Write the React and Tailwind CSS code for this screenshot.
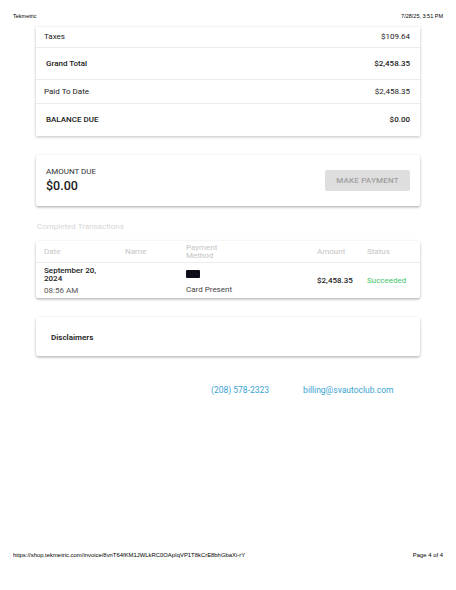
const SUMMARY_ROWS = [
    { label: 'Taxes', value: '$109.64', h: 'h-[21px]', bold: false },
    { label: 'Grand Total', value: '$2,458.35', h: 'h-[32px]', bold: true },
    { label: 'Paid To Date', value: '$2,458.35', h: 'h-[24px]', bold: false },
    { label: 'BALANCE DUE', value: '$0.00', h: 'h-[32px]', bold: true },
];

const cardCls = 'bg-white rounded-[2px] shadow-[0_1px_3px_rgba(0,0,0,0.25),0_2px_2px_rgba(0,0,0,0.08)]';

const App = () => {
    return (
        <div className="w-[456px] h-[590px] bg-white flex flex-col text-[#212121]" style={{ fontFamily: 'Roboto, "Liberation Sans", sans-serif' }}>
            {/* Print header */}
            <div className="flex justify-between px-[13px] pt-[12px] h-[27px] text-[5.5px] text-black" style={{ fontFamily: '"Liberation Sans", Arial, sans-serif' }}>
                <span>Tekmetric</span>
                <span>7/28/25, 3:51 PM</span>
            </div>

            <div className="mx-[36px] flex flex-col">
                {/* Summary card (continued from previous page) */}
                <div className="bg-white shadow-[0_1px_3px_rgba(0,0,0,0.25)] flex flex-col">
                    {SUMMARY_ROWS.map((r, i) => (
                        <div key={r.label} className={`${r.h} flex items-center justify-between pr-[10px] text-[8px] ${r.bold ? 'pl-[10px] font-medium' : 'pl-[8px]'} ${i < SUMMARY_ROWS.length - 1 ? 'border-b border-[#ececec]' : ''}`}>
                            <span>{r.label}</span>
                            <span>{r.value}</span>
                        </div>
                    ))}
                </div>

                {/* Amount due */}
                <div className={`${cardCls} mt-[19px] h-[51px] flex items-center justify-between pl-[10px] pr-[10px]`}>
                    <div className="flex flex-col leading-none">
                        <span className="text-[8px] text-[#333]">AMOUNT DUE</span>
                        <span className="text-[12.5px] font-medium mt-[4px]">$0.00</span>
                    </div>
                    <div className="w-[85px] h-[21px] rounded-[2px] bg-[#dedede] flex items-center justify-center text-[8px] font-medium tracking-[0.2px] text-[#9e9e9e]">
                        MAKE PAYMENT
                    </div>
                </div>

                {/* Transactions */}
                <div className="mt-[17px] h-[12px] pl-[1px] text-[8px] text-[#d6d6d6] leading-none">Completed Transactions</div>
                <div className={`${cardCls} mt-[6px] flex flex-col text-[8px]`}>
                    <div className="h-[22px] grid grid-cols-[81px_61px_131px_50px_1fr] items-center pl-[8px] border-b border-[#ececec] text-[#c4c4c4]">
                        <span>Date</span>
                        <span>Name</span>
                        <span className="leading-[8px]">Payment<br />Method</span>
                        <span>Amount</span>
                        <span>Status</span>
                    </div>
                    <div className="h-[35px] grid grid-cols-[81px_61px_131px_50px_1fr] items-center pl-[8px]">
                        <div className="flex flex-col leading-[8px]">
                            <span className="font-medium">September 20,</span>
                            <span className="font-medium">2024</span>
                            <span className="mt-[4px] text-[#555]">08:56 AM</span>
                        </div>
                        <span></span>
                        <div className="flex flex-col">
                            <div className="w-[14px] h-[8px] bg-[#0b0d18] rounded-[1px] mt-[3px]"></div>
                            <span className="mt-[8px] text-[#444] leading-none">Card Present</span>
                        </div>
                        <span className="font-medium">$2,458.35</span>
                        <span className="text-[#3fc56b]">Succeeded</span>
                    </div>
                </div>

                {/* Disclaimers */}
                <div className={`${cardCls} mt-[19px] h-[39px] flex items-center pl-[15px] pt-[2px] text-[8px] font-semibold`}>
                    Disclaimers
                </div>

                {/* Contact */}
                <div className="mt-[28px] flex text-[8.5px] text-[#3aa3d2]">
                    <span className="ml-[175px]">(208) 578-2323</span>
                    <span className="ml-[34px]">billing@svautoclub.com</span>
                </div>
            </div>

            {/* Print footer */}
            <div className="mt-auto mb-[30px] flex justify-between items-center px-[13px] text-[5.9px] text-black" style={{ fontFamily: '"Liberation Sans", Arial, sans-serif' }}>
                <span>https://shop.tekmetric.com/invoice/8vnT64fKM1JWLkRC0OApIqVP1T8kCrE8bhGbaXi-rY</span>
                <span>Page 4 of 4</span>
            </div>
        </div>
    );
};

export default App;
